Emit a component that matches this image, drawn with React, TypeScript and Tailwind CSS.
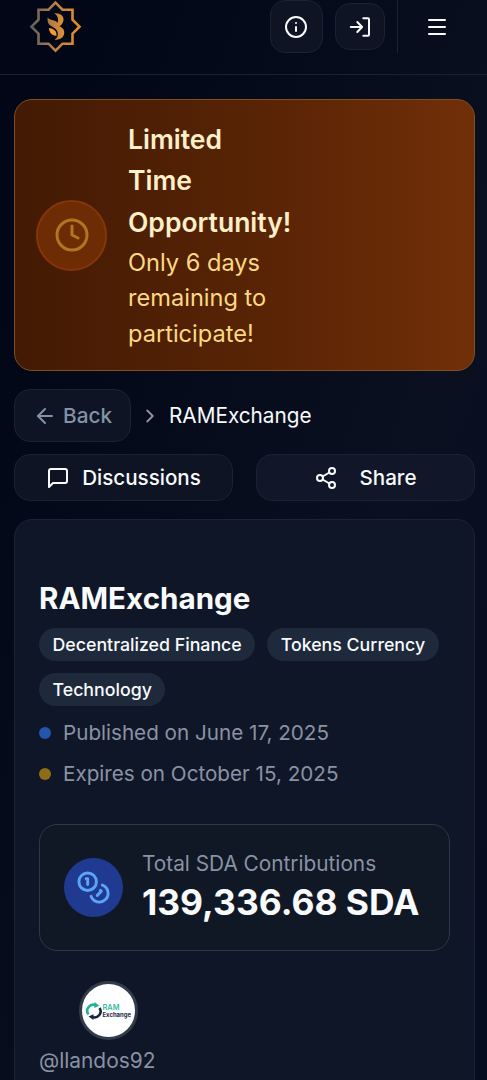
import { ArrowLeft, ChevronRight, Clock, Info, Menu, Share2 } from 'lucide-react';

const tags = ['Decentralized Finance', 'Tokens Currency', 'Technology'];

function Logo() {
  return (
    <svg viewBox="0 0 53 54" className="w-[53px] h-[54px]" fill="none">
      <defs>
        <linearGradient id="gold" x1="0" y1="0" x2="1" y2="0">
          <stop offset="0" stopColor="#62605e" />
          <stop offset="0.5" stopColor="#b98347" />
          <stop offset="1" stopColor="#e58e22" />
        </linearGradient>
        <linearGradient id="goldMark" x1="0" y1="0" x2="1" y2="0">
          <stop offset="0" stopColor="#a87642" />
          <stop offset="1" stopColor="#df9235" />
        </linearGradient>
      </defs>
      <path
        d="M26.500 2.700 33.500 9.700h10v10l7 7-7 7v10h-10l-7 7-7-7h-10v-10l-7-7 7-7v-10h10z"
        stroke="url(#gold)"
        strokeWidth="2.600"
      />
      <path
        d="M25 13.300C31 12.500 35 16 34.500 20c-.3 3-2 5-4 6.300 4 1.700 5.300 4.700 4.600 7.700-.8 4-4.600 6-9.600 5.700 3-1.700 4-4.700 3-7.700-1-3.500-4-4.500-6.500-6-3-1.800-4-5-3.300-8.500 1.300 2 3.800 2.300 6.300 3 2 .6 3 1.500 3.200 2.500 1.600-2.500 1.100-7.500-3.200-9.700z"
        fill="url(#goldMark)"
      />
      <path d="M20 28c4.500.5 8 3 7.500 7.800-4 0-7.500-2.800-7.500-7.800z" fill="#ee9c32" />
    </svg>
  );
}

function LoginIcon() {
  return (
    <svg viewBox="0 0 24 24" className="w-6 h-6" fill="none" stroke="currentColor" strokeWidth="2" strokeLinecap="round" strokeLinejoin="round">
      <path d="M15.300 3.300H20q1 0 1 1v15.400q0 1-1 1h-4.700M2.800 12h11M9.300 7l4.800 5-4.800 5" />
    </svg>
  );
}

function MessageIcon() {
  return (
    <svg viewBox="0 0 24 24" className="w-6 h-6" fill="none" stroke="currentColor" strokeWidth="2" strokeLinecap="round" strokeLinejoin="round">
      <path d="M21 15a2 2 0 0 1-2 2H7l-4 4V5a2 2 0 0 1 2-2h14a2 2 0 0 1 2 2z" />
    </svg>
  );
}

function CoinsIcon() {
  return (
    <svg viewBox="0 0 24 24" className="w-[35px] h-[35px]" fill="none" stroke="currentColor" strokeWidth="2" strokeLinecap="round" strokeLinejoin="round">
      <circle cx="8" cy="8" r="6" />
      <path d="M18.090 10.370A6 6 0 1 1 10.340 18M7 6h1v4M16.710 13.880l.7.710-2.820 2.820" />
    </svg>
  );
}

function Avatar() {
  return (
    <div className="ml-10 w-[59px] h-[59px] rounded-full bg-white border-[3px] border-[#333c4b] flex items-center justify-center">
      <svg viewBox="0 0 50 24" className="w-[50px] h-6 shrink-0">
        <path d="M4.500 15.500A6 6 0 0 1 12 6.500" fill="none" stroke="#20b394" strokeWidth="2.600" />
        <path d="m10.500 3 4.800 3.800-5 2.200z" fill="#20b394" />
        <path d="M15.500 9A6 6 0 0 1 8 17.800" fill="none" stroke="#172641" strokeWidth="2.600" />
        <path d="m9.500 21-5-3.500 5-2.300z" fill="#172641" />
        <text x="18.500" y="11" fontFamily="Inter" fontSize="7" fontWeight="600" fill="#35bba2" textLength="17" lengthAdjust="spacingAndGlyphs">RAM</text>
        <text x="18.500" y="17.500" fontFamily="Inter" fontSize="6.200" fontWeight="700" fill="#202b42" textLength="28.500" lengthAdjust="spacingAndGlyphs">Exchange</text>
      </svg>
    </div>
  );
}

export default function App() {
  return (
    <div className="w-full h-[1080px] overflow-hidden bg-[linear-gradient(110deg,#020617_0%,#030919_25%,#0a1020_65%,#070d20_100%)] font-['Inter',sans-serif] text-slate-50">
      {/* Header */}
      <header className="h-[75px] border-b border-[#1a2130] flex items-start justify-between pl-[29px] pr-[38px]">
        <Logo />
        <div className="flex items-start">
          <button className="w-[53px] h-[53px] rounded-[15px] border border-[#1c2233] bg-[#0e1424] flex items-center justify-center">
            <Info className="w-6 h-6 mr-px" />
          </button>
          <button className="w-[50px] h-[47px] mt-[3px] ml-3 rounded-[15px] border border-[#1c2233] bg-[#0e1424] flex items-center justify-center">
            <LoginIcon />
          </button>
          <div className="w-px h-[53px] ml-3 bg-[#1c2233]" />
          <button className="ml-[27px] mt-[15px]">
            <Menu className="w-6 h-6" />
          </button>
        </div>
      </header>

      <main className="pl-[14px] pr-3 pt-6">
        {/* Deadline banner */}
        <section className="h-[272px] rounded-[18px] border border-[#80501e] bg-linear-to-r from-[#431a04] via-[#572305] to-[#712f08] flex items-center pl-[21px]">
          <div className="w-[71px] h-[71px] shrink-0 rounded-full border-2 border-[#853509] bg-[#6d2c03] flex items-center justify-center">
            <Clock className="w-9 h-9 text-[#ad7821]" />
          </div>
          <div className="ml-[21px] w-[150px]">
            <h3 className="text-[26.5px] leading-[41.3px] font-semibold text-[#fdefc8]">Limited Time Opportunity!</h3>
            <p className="mt-[2px] text-[23.6px] leading-[35.4px] text-[#fbd982]">Only 6 days remaining to participate!</p>
          </div>
        </section>

        {/* Breadcrumb */}
        <nav className="mt-[18px] flex items-center text-[20.75px]">
          <button className="w-[117px] h-[53px] rounded-[16px] border border-[#1c2233] bg-[#0e1424] flex items-center pl-[18px] gap-[6px] font-medium text-[#8492a6]">
            <ArrowLeft className="w-6 h-6" />
            Back
          </button>
          <ChevronRight className="w-[22px] h-[22px] ml-[8px] text-[#8b96a8]" />
          <span className="ml-2">RAMExchange</span>
        </nav>

        {/* Actions */}
        <div className="mt-3 grid grid-cols-2 gap-[23px] text-[20.6px] font-medium">
          <button className="h-[47px] rounded-[16px] border border-[#1c2233] bg-[#0e1424] flex items-center justify-center gap-3">
            <MessageIcon />
            <span className="pt-px">Discussions</span>
          </button>
          <button className="h-[47px] rounded-[16px] border border-[#1c2233] bg-[#111728] flex items-center justify-center gap-[21px]">
            <Share2 className="w-6 h-6" />
            <span className="pt-px">Share</span>
          </button>
        </div>

        {/* Project card */}
        <section className="mt-[18px] h-[640px] rounded-[18px] border border-[#1c2333] bg-[#0f1627] px-6 pt-[58px]">
          <h1 className="text-[29.6px] leading-[41px] font-bold">RAMExchange</h1>
          <div className="mt-[9px] flex flex-wrap gap-x-3 gap-y-3">
            {tags.map((tag) => (
              <span key={tag} className="h-[33px] rounded-full bg-[#1e293b] px-[13.5px] pt-px flex items-center text-[17.75px] font-medium">
                {tag}
              </span>
            ))}
          </div>
          <div className="mt-[6px] text-[20.65px] leading-[41px] text-[#8a92a4]">
            <p className="flex items-center gap-3">
              <span className="w-3 h-3 rounded-full bg-[#2355ac]" />
              Published on June 17, 2025
            </p>
            <p className="flex items-center gap-3">
              <span className="w-3 h-3 rounded-full bg-[#8e6c17]" />
              Expires on October 15, 2025
            </p>
          </div>

          {/* Contributions */}
          <div className="mt-[30px] h-[127px] rounded-[18px] border-[1.5px] border-[#303847] bg-[#101725] flex items-center pl-6">
            <div className="w-[59px] h-[59px] rounded-full bg-[#203a91] text-[#5ba4f7] flex items-center justify-center">
              <CoinsIcon />
            </div>
            <div className="ml-[19px]">
              <p className="text-[20.8px] leading-[30px] text-[#8a92a4]">Total SDA Contributions</p>
              <p className="text-[35.4px] leading-[47px] font-bold">139,336.68 SDA</p>
            </div>
          </div>

          <div className="mt-[30px]">
            <Avatar />
            <p className="mt-[6px] text-[20.9px] leading-[30px] text-[#8a92a4]">@llandos92</p>
          </div>
        </section>
      </main>
    </div>
  );
}
